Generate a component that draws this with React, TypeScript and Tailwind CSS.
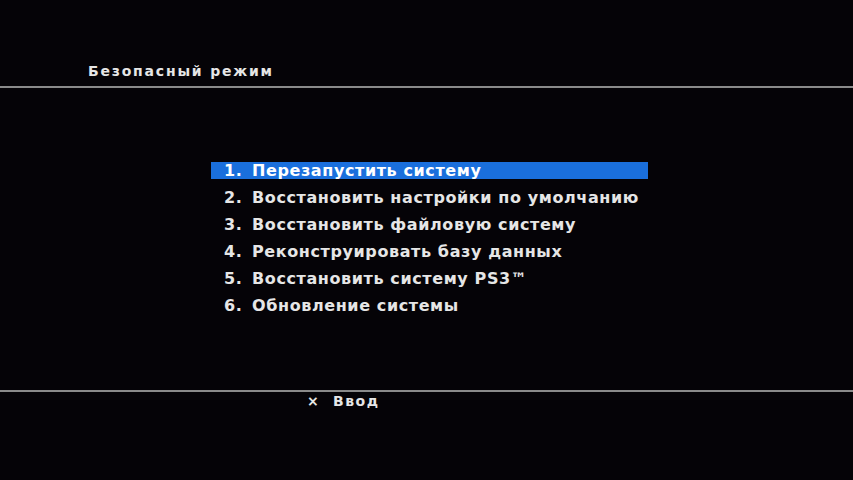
import React from "react";

const items = [
  "Перезапустить систему",
  "Восстановить настройки по умолчанию",
  "Восстановить файловую систему",
  "Реконструировать базу данных",
  "Восстановить систему PS3™",
  "Обновление системы",
];

export default function App() {
  return (
    <div
      className="w-[853px] h-[480px] bg-[#050307] text-[#e6e6e6] flex flex-col overflow-hidden"
      style={{ fontFamily: '"DejaVu Sans", "Liberation Sans", sans-serif' }}
    >
      <div className="h-[86px] flex items-end pl-[88px] pb-[4px]">
        <span className="text-[14px] font-semibold tracking-[1.8px]">Безопасный режим</span>
      </div>
      <div className="h-[2px] bg-[#8a8a8a]" />
      <div className="flex-1 flex flex-col pt-[74px] pl-[211px]">
        {items.map((t, i) => (
          <div key={i} className="h-[27px] flex items-start">
            <div
              className={`flex items-center h-[17px] pt-[1px] ${
                i === 0 ? "bg-[#1a6fdc] w-[437px] text-white" : ""
              }`}
            >
              <span className="text-[16px] font-bold w-[41px] pl-[13px] tracking-[0.5px]">
                {i + 1}.
              </span>
              <span className="text-[16px] font-bold tracking-[0.6px] whitespace-nowrap">{t}</span>
            </div>
          </div>
        ))}
      </div>
      <div className="h-[2px] bg-[#8a8a8a]" />
      <div className="h-[88px] pl-[307px] flex items-start leading-[18px]">
        <span className="text-[14px] font-bold w-[26px]">×</span>
        <span className="text-[14px] font-bold tracking-[1.5px]">Ввод</span>
      </div>
    </div>
  );
}
